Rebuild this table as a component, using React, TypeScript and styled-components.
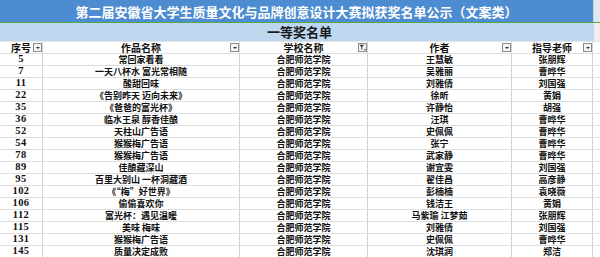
import React from "react";
import styled, { createGlobalStyle } from "styled-components";

const GlobalStyle = createGlobalStyle`
  html, body { margin: 0; padding: 0; background: #ffffff; }
  body { font-family: "Noto Sans CJK SC", "Noto Sans", sans-serif; }
`;

const COLS = "43px 197px 128px 144px 81px 1fr";

const Sheet = styled.div`
  width: 600px;
  height: 257px;
  overflow: hidden;
  display: flex;
  flex-direction: column;
  background: #ffffff;
`;

const Band = styled.div<{ $h: number; $line: string }>`
  display: grid;
  grid-template-columns: 593px 1fr;
  height: ${(p) => p.$h}px;
  border-bottom: 1px solid ${(p) => p.$line};
  flex-shrink: 0;
`;

const BandCell = styled.div<{ $bg: string; $color: string; $size: number; $shift?: number; $lift?: number }>`
  background: ${(p) => p.$bg};
  color: ${(p) => p.$color};
  font-family: "Noto Sans CJK SC", sans-serif;
  font-weight: 700;
  font-size: ${(p) => p.$size}px;
  display: flex;
  align-items: center;
  justify-content: center;
  padding-left: ${(p) => p.$shift ?? 0}px;
  padding-bottom: ${(p) => p.$lift ?? 0}px;
  white-space: nowrap;
  line-height: 1;
`;

const Strip = styled.div<{ $bg: string }>`
  background: ${(p) => p.$bg};
  border-left: 1px solid #c9d3de;
`;

const Row = styled.div`
  display: grid;
  grid-template-columns: ${COLS};
  height: 12px;
  border-bottom: 1px solid #dedede;
  box-sizing: border-box;
  flex-shrink: 0;
`;

const Cell = styled.div<{ $num?: boolean; $head?: boolean }>`
  position: relative;
  display: flex;
  align-items: center;
  justify-content: center;
  border-right: 1px solid #d2d2d2;
  white-space: nowrap;
  color: #111111;
  line-height: 1;
  font-family: ${(p) =>
    p.$num ? '"Liberation Serif", "Times New Roman", serif' : '"Noto Sans CJK SC", sans-serif'};
  font-weight: 700;
  font-size: ${(p) => (p.$head ? 10 : p.$num ? 10.5 : 9)}px;
  letter-spacing: ${(p) => (p.$num ? "0.4px" : "0")};
`;

const EmptyCell = styled.div`
  background: #ffffff;
`;

const FilterBtn = styled.span`
  position: absolute;
  right: 0;
  top: 1px;
  width: 9px;
  height: 9px;
  box-sizing: border-box;
  border: 1px solid #8c8c8c;
  background: #f3f3f3;
  display: flex;
  align-items: center;
  justify-content: center;
`;

const Arrow = styled.span`
  width: 0;
  height: 0;
  border-left: 2px solid transparent;
  border-right: 2px solid transparent;
  border-top: 2px solid #333;
  margin-top: 1px;
`;

const FunnelIcon = () => (
  <svg width="7" height="7" viewBox="0 0 7 7">
    <path d="M0.5 0.8 H5 L3.2 3 V5.8 L2.3 5.2 V3 Z" fill="#333" />
    <rect x="5.3" y="5" width="1.2" height="1.2" fill="#333" />
  </svg>
);

const Filter = ({ active }: { active?: boolean }) => (
  <FilterBtn>{active ? <FunnelIcon /> : <Arrow />}</FilterBtn>
);

const rows: [string, string, string, string, string][] = [
  ["5", "常回家看看", "合肥师范学院", "王慧敏", "张朋辉"],
  ["7", "一天八杯水 富光常相随", "合肥师范学院", "吴雅丽", "曹晔华"],
  ["11", "酸甜回味", "合肥师范学院", "刘雅倩", "刘国强"],
  ["22", "《告别昨天 迈向未来》", "合肥师范学院", "徐昕", "黄娟"],
  ["35", "《爸爸的富光杯》", "合肥师范学院", "许静怡", "胡强"],
  ["36", "临水王泉 醇香佳酿", "合肥师范学院", "汪琪", "曹晔华"],
  ["52", "天柱山广告语", "合肥师范学院", "史佩佩", "曹晔华"],
  ["54", "猴猴梅广告语", "合肥师范学院", "张宁", "曹晔华"],
  ["78", "猴猴梅广告语", "合肥师范学院", "武家静", "曹晔华"],
  ["89", "佳酿藏深山", "合肥师范学院", "谢宜雯", "刘国强"],
  ["95", "百里大别山 一杯洞藏酒", "合肥师范学院", "翟佳昌", "高彦静"],
  ["102", "《“梅”好世界》", "合肥师范学院", "彭楠楠", "袁晓薇"],
  ["106", "偷偷喜欢你", "合肥师范学院", "钱洁王", "黄娟"],
  ["112", "富光杯：遇见温暖", "合肥师范学院", "马紫瑜 江梦茹", "张朋辉"],
  ["115", "美味 梅味", "合肥师范学院", "刘雅倩", "刘国强"],
  ["131", "猴猴梅广告语", "合肥师范学院", "史佩佩", "曹晔华"],
  ["145", "质量决定成败", "合肥师范学院", "沈琪润", "郑洁"],
];

export default function App() {
  return (
    <Sheet>
      <GlobalStyle />
      <Band $h={22} $line="#5aa84e">
        <BandCell $bg="#4d8cd0" $color="#ffffff" $size={13}>
          第二届安徽省大学生质量文化与品牌创意设计大赛拟获奖名单公示（文案类）
        </BandCell>
        <Strip $bg="#dfe7f0" />
      </Band>
      <Band $h={18} $line="#e4e4e4">
        <BandCell $bg="#bdd7ee" $color="#1a1a1a" $size={13} $shift={6} $lift={2}>
          一等奖名单
        </BandCell>
        <Strip $bg="#eeeeee" />
      </Band>
      <Row>
        <Cell $head>
          序号
          <Filter />
        </Cell>
        <Cell $head>
          作品名称
          <Filter />
        </Cell>
        <Cell $head>
          学校名称
          <Filter active />
        </Cell>
        <Cell $head>
          作者
          <Filter />
        </Cell>
        <Cell $head>
          指导老师
          <Filter />
        </Cell>
        <EmptyCell />
      </Row>
      {rows.map((r) => (
        <Row key={r[0]}>
          <Cell $num>{r[0]}</Cell>
          <Cell>{r[1]}</Cell>
          <Cell>{r[2]}</Cell>
          <Cell>{r[3]}</Cell>
          <Cell>{r[4]}</Cell>
          <EmptyCell />
        </Row>
      ))}
    </Sheet>
  );
}
